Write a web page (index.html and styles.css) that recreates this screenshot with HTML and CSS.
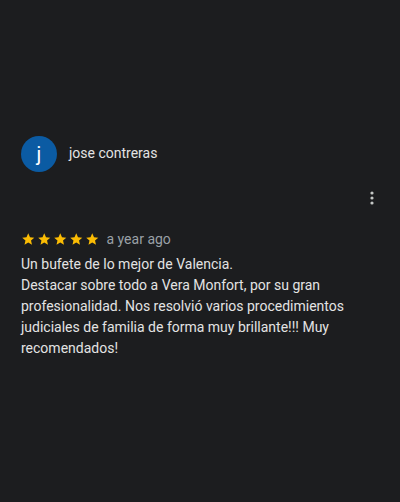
FILE: index.html
```html
<!DOCTYPE html>
<html lang="es">

<head>
    <meta charset="UTF-8">
    <meta name="viewport" content="width=device-width, initial-scale=1.0">
    <title>Reseña</title>
    <link rel="stylesheet" href="styles.css">
</head>

<body>
    <div class="review">
        <div class="author">
            <div class="avatar">j</div>
            <div class="name">jose contreras</div>
        </div>

        <div class="menu-row">
            <svg class="dots" width="4" height="14" viewBox="0 0 4 14">
                <circle cx="2" cy="2" r="1.6" fill="#c4c7c5" />
                <circle cx="2" cy="7" r="1.6" fill="#c4c7c5" />
                <circle cx="2" cy="12" r="1.6" fill="#c4c7c5" />
            </svg>
        </div>

        <div class="rating">
            <div class="stars">
                <svg viewBox="0 0 24 24"><path d="M12 2.2l2.9 6.6 7.1.6-5.4 4.7 1.6 7-6.2-3.7-6.2 3.7 1.6-7L2 9.4l7.1-.6z" /></svg>
                <svg viewBox="0 0 24 24"><path d="M12 2.2l2.9 6.6 7.1.6-5.4 4.7 1.6 7-6.2-3.7-6.2 3.7 1.6-7L2 9.4l7.1-.6z" /></svg>
                <svg viewBox="0 0 24 24"><path d="M12 2.2l2.9 6.6 7.1.6-5.4 4.7 1.6 7-6.2-3.7-6.2 3.7 1.6-7L2 9.4l7.1-.6z" /></svg>
                <svg viewBox="0 0 24 24"><path d="M12 2.2l2.9 6.6 7.1.6-5.4 4.7 1.6 7-6.2-3.7-6.2 3.7 1.6-7L2 9.4l7.1-.6z" /></svg>
                <svg viewBox="0 0 24 24"><path d="M12 2.2l2.9 6.6 7.1.6-5.4 4.7 1.6 7-6.2-3.7-6.2 3.7 1.6-7L2 9.4l7.1-.6z" /></svg>
            </div>
            <span class="date">a year ago</span>
        </div>

        <p class="text">Un bufete de lo mejor de Valencia.<br>Destacar sobre todo a Vera Monfort, por su gran profesionalidad. Nos resolvió varios procedimientos judiciales de familia de forma muy brillante!!! Muy recomendados!</p>
    </div>
</body>

</html>
```

FILE: styles.css
```css
body {
    margin: 0;
    background-color: #1c1d1f;
    font-family: "Roboto", sans-serif;
    color: #e3e3e3;
    height: 502px;
    overflow: hidden;
}

.review {
    padding: 136px 21px 0 21px;
}

.author {
    display: flex;
    align-items: center;
    gap: 12px;
}

.avatar {
    width: 36px;
    height: 36px;
    border-radius: 50%;
    background: #0b5ba3;
    color: #ffffff;
    font-size: 20px;
    display: flex;
    justify-content: center;
    align-items: center;
}

.name {
    font-size: 14px;
    color: #e3e3e3;
    padding-bottom: 2px;
}

.menu-row {
    display: flex;
    justify-content: flex-end;
    margin-top: 19px;
    padding-right: 5px;
    height: 14px;
}

.rating {
    display: flex;
    align-items: center;
    gap: 7px;
    margin-top: 25px;
    height: 18px;
}

.stars {
    display: flex;
    gap: 1.5px;
}

.stars svg {
    width: 14.5px;
    height: 14.5px;
    fill: #fbbc04;
}

.date {
    font-size: 14px;
    color: #9aa0a6;
}

.text {
    margin: 6px 0 0 0;
    font-size: 14px;
    line-height: 21px;
    color: #e3e3e3;
    padding-right: 10px;
}
```
